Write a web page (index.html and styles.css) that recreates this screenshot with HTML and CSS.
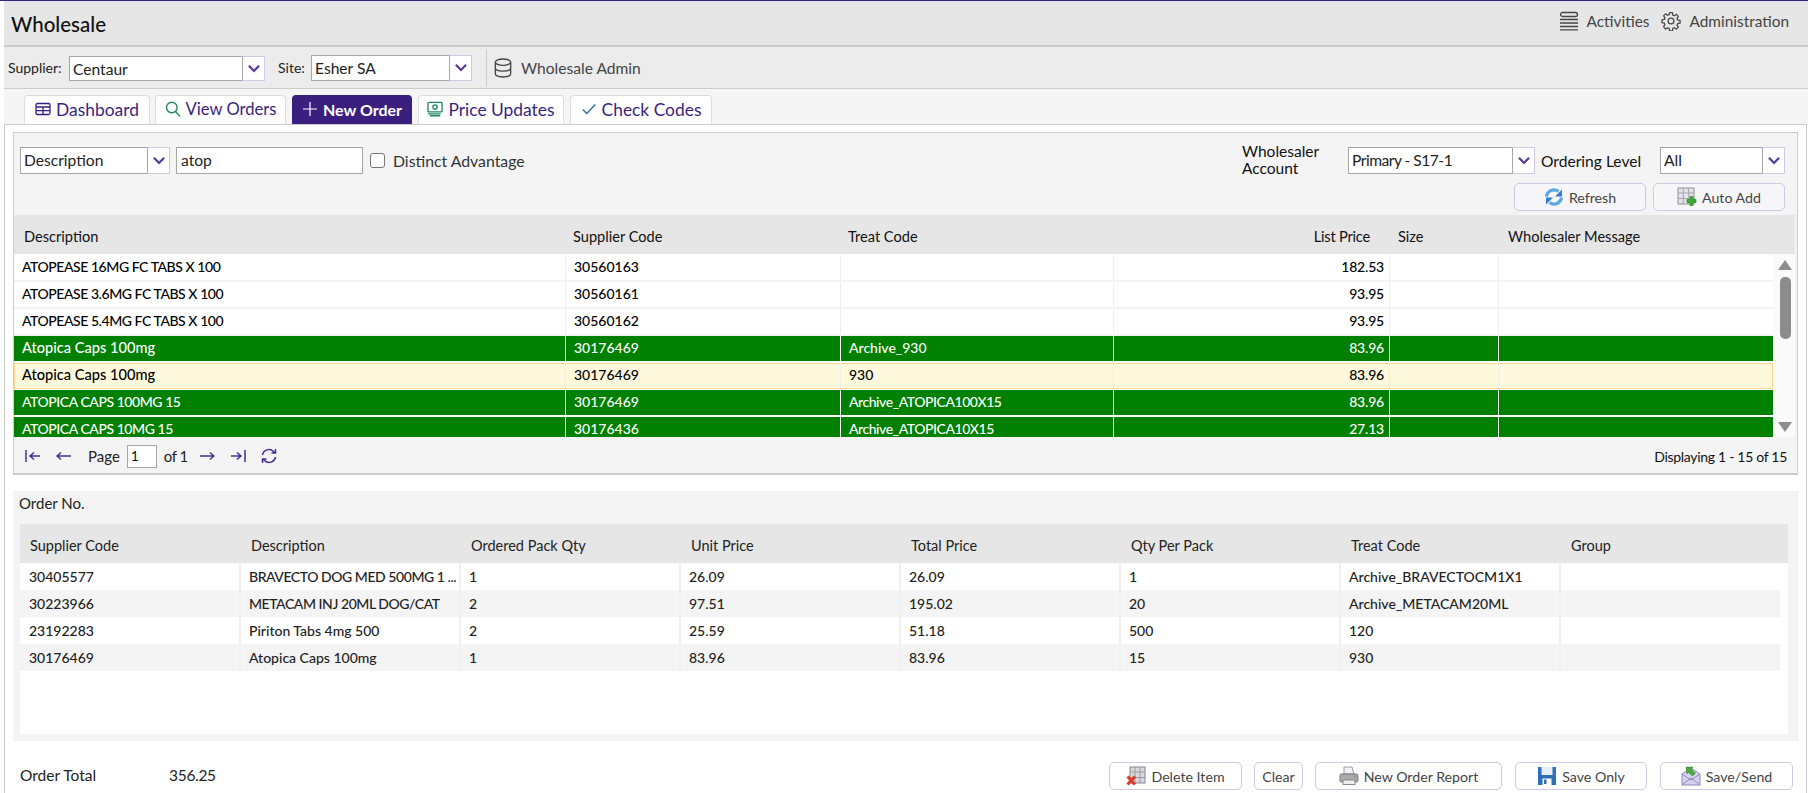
FILE: index.html
```html
<!DOCTYPE html>
<html lang="en">
<head>
<meta charset="utf-8">
<title>Wholesale</title>
<link rel="stylesheet" href="styles.css">
</head>
<body>
<div class="app">
  <header class="title-bar">
    <h1 class="title">Wholesale</h1>
    <nav class="top-links">
      <a class="top-link">
        <svg class="ico-20" viewBox="0 0 20 20" fill="none" stroke="#444" stroke-width="1.3"><rect x="1.5" y="1.5" width="17" height="4" rx="2"/><path d="M1 8.5h18M1 12h18M1 15.5h18M1 18.8h18"/></svg>
        <span>Activities</span>
      </a>
      <a class="top-link">
        <svg class="ico-20" viewBox="0 0 24 24" fill="none" stroke="#444" stroke-width="1.5" stroke-linejoin="round"><circle cx="12" cy="12" r="3.5"/><path d="M10.3 2h3.4l.5 2.9 1.9.8 2.4-1.7 2.4 2.4-1.7 2.4.8 1.9 2.9.5v3.4l-2.9.5-.8 1.9 1.7 2.4-2.4 2.4-2.4-1.7-1.9.8-.5 2.9h-3.4l-.5-2.9-1.9-.8-2.4 1.7L3.100 18.800l1.700-2.400-.8-1.900-2.900-.5v-3.400l2.900-.5.8-1.900-1.700-2.400 2.400-2.400 2.400 1.700 1.900-.8z"/></svg>
        <span>Administration</span>
      </a>
    </nav>
  </header>

  <div class="toolbar">
    <label class="tool-label">Supplier:</label>
    <div class="combo combo-supplier"><span class="combo-text">Centaur</span><span class="combo-arrow"><svg class="chev" viewBox="0 0 12 8"><path d="M1.500 1.500L6 6.200l4.500-4.700"/></svg></span></div>
    <label class="tool-label site-label">Site:</label>
    <div class="combo combo-site"><span class="combo-text">Esher SA</span><span class="combo-arrow"><svg class="chev" viewBox="0 0 12 8"><path d="M1.500 1.500L6 6.200l4.500-4.700"/></svg></span></div>
    <span class="tool-sep"></span>
    <svg class="ico-db" viewBox="0 0 20 22" fill="none" stroke="#444" stroke-width="1.500"><ellipse cx="10" cy="4.500" rx="8.500" ry="3.500"/><path d="M1.500 4.500v13c0 2 3.800 3.500 8.500 3.500s8.500-1.500 8.500-3.500v-13M1.500 11c0 2 3.800 3.500 8.500 3.500s8.500-1.500 8.500-3.500"/></svg>
    <span class="tool-text">Wholesale Admin</span>
  </div>

  <nav class="tabs">
    <a class="tab tab-dash">
      <svg class="ico-tab" viewBox="0 0 16 14" fill="none" stroke="#3b1f7f" stroke-width="1.300"><rect x="1" y="1.500" width="14" height="11" rx="1.500"/><path d="M1 5h14M1 8.700h14M8 5v7.500"/></svg>
      Dashboard</a>
    <a class="tab tab-view">
      <svg class="ico-tab" viewBox="0 0 16 16" fill="none" stroke="#1f8a5c" stroke-width="1.400"><circle cx="6.800" cy="6.500" r="5.300"/><path d="M10.500 10.500l4.500 5"/></svg>
      View Orders</a>
    <a class="tab tab-new">
      <svg class="ico-tab" viewBox="0 0 16 16" fill="none" stroke="#fff" stroke-width="1.200"><path d="M8 1v14M1 8h14"/></svg>
      New Order</a>
    <a class="tab tab-price">
      <svg class="ico-tab" viewBox="0 0 17 16" fill="none" stroke="#1f8a5c" stroke-width="1.400"><rect x="1" y="1" width="15" height="10" rx="1"/><circle cx="8.500" cy="6" r="2.300"/><path d="M1 13.200h13.500M3 15.200h11"/></svg>
      Price Updates</a>
    <a class="tab tab-check">
      <svg class="ico-tab" viewBox="0 0 14 12" fill="none" stroke="#2c6ca8" stroke-width="1.200"><path d="M1.500 6.500l3.500 3.500 7.500-8"/></svg>
      Check Codes</a>
  </nav>

  <main class="main">
    <section class="search-panel">
      <div class="filters">
        <div class="filters-left">
          <div class="combo combo-field"><span class="combo-text">Description</span><span class="combo-arrow"><svg class="chev" viewBox="0 0 12 8"><path d="M1.500 1.500L6 6.200l4.500-4.700"/></svg></span></div>
          <div class="text-input search-input">atop</div>
          <span class="checkbox"></span>
          <span class="check-label">Distinct Advantage</span>
        </div>
        <div class="filters-right">
          <div class="filters-row">
            <span class="acct-label">Wholesaler Account</span>
            <div class="combo combo-account"><span class="combo-text">Primary - S17-1</span><span class="combo-arrow"><svg class="chev" viewBox="0 0 12 8"><path d="M1.500 1.500L6 6.200l4.500-4.700"/></svg></span></div>
            <span class="level-label">Ordering Level</span>
            <div class="combo combo-level"><span class="combo-text">All</span><span class="combo-arrow"><svg class="chev" viewBox="0 0 12 8"><path d="M1.500 1.500L6 6.200l4.500-4.700"/></svg></span></div>
          </div>
          <div class="filters-actions">
            <button class="btn btn-wide">
              <svg class="ico-btn" viewBox="0 0 20 20" fill="none" stroke-width="3.200"><path d="M2.500 9.500a7.500 7.500 0 0 1 12-5" stroke="#5aa6e6"/><path d="M18 2.500v7h-7z" fill="#2f80cf"/><path d="M17.500 10.500a7.500 7.500 0 0 1-12 5" stroke="#5aa6e6"/><path d="M2 17.500v-7h7z" fill="#2f80cf"/></svg>
              Refresh</button>
            <button class="btn btn-wide">
              <svg class="ico-btn" viewBox="0 0 20 20"><rect x="1" y="1" width="16" height="16" fill="#e4e4e8" stroke="#8f8f96"/><path d="M1 6h16M1 11.500h16M6.300 1v16M11.700 1v16" stroke="#a3a3aa" fill="none"/><path d="M13 9.500h3v3h3v3h-3v3h-3v-3h-3v-3h3z" fill="#3cae3a" stroke="#1d7a1d" stroke-width=".6"/></svg>
              Auto Add</button>
          </div>
        </div>
      </div>

      <div class="grid-head">
        <div class="gh gh-first">Description</div>
        <div class="gh">Supplier Code</div>
        <div class="gh">Treat Code</div>
        <div class="gh gh-num">List Price</div>
        <div class="gh">Size</div>
        <div class="gh">Wholesaler Message</div>
      </div>
      <div class="grid-wrap">
        <div class="grid-body">
          <div class="row"><div class="cell caps">ATOPEASE 16MG FC TABS X 100</div><div class="cell">30560163</div><div class="cell"></div><div class="cell num">182.53</div><div class="cell"></div><div class="cell"></div></div>
          <div class="row"><div class="cell caps">ATOPEASE 3.6MG FC TABS X 100</div><div class="cell">30560161</div><div class="cell"></div><div class="cell num">93.95</div><div class="cell"></div><div class="cell"></div></div>
          <div class="row"><div class="cell caps">ATOPEASE 5.4MG FC TABS X 100</div><div class="cell">30560162</div><div class="cell"></div><div class="cell num">93.95</div><div class="cell"></div><div class="cell"></div></div>
          <div class="row green"><div class="cell mixed">Atopica Caps 100mg</div><div class="cell">30176469</div><div class="cell">Archive_930</div><div class="cell num">83.96</div><div class="cell"></div><div class="cell"></div></div>
          <div class="row selected"><div class="cell mixed">Atopica Caps 100mg</div><div class="cell">30176469</div><div class="cell">930</div><div class="cell num">83.96</div><div class="cell"></div><div class="cell"></div></div>
          <div class="row green"><div class="cell caps">ATOPICA CAPS 100MG 15</div><div class="cell">30176469</div><div class="cell caps">Archive_ATOPICA100X15</div><div class="cell num">83.96</div><div class="cell"></div><div class="cell"></div></div>
          <div class="row green"><div class="cell caps">ATOPICA CAPS 10MG 15</div><div class="cell">30176436</div><div class="cell caps">Archive_ATOPICA10X15</div><div class="cell num">27.13</div><div class="cell"></div><div class="cell"></div></div>
        </div>
        <div class="scrollbar">
          <span class="sb-up"></span>
          <span class="sb-thumb"></span>
          <span class="sb-down"></span>
        </div>
      </div>
      <div class="pager">
        <svg class="pg-ico" viewBox="0 0 16 14"><path d="M1 1v12M15 7H5M9 3.500L5 7l4 3.500"/></svg>
        <svg class="pg-ico pg-prev" viewBox="0 0 16 14"><path d="M15 7H1M5 3.500L1 7l4 3.500"/></svg>
        <span class="pg-text">Page</span>
        <div class="pg-input">1</div>
        <span class="pg-text pg-of">of 1</span>
        <svg class="pg-ico pg-next" viewBox="0 0 16 14"><path d="M1 7h14M11 3.500L15 7l-4 3.500"/></svg>
        <svg class="pg-ico" viewBox="0 0 16 14"><path d="M15 1v12M1 7h10M7 3.500L11 7l-4 3.500"/></svg>
        <svg class="pg-ico pg-refresh" viewBox="0 0 16 16"><path d="M1.500 7a6.500 6.500 0 0 1 11-3.500L14.500 5M14.500 1v4h-4M14.500 9a6.500 6.500 0 0 1-11 3.500L1.500 11M1.500 15v-4h4"/></svg>
        <span class="pg-display">Displaying 1 - 15 of 15</span>
      </div>
    </section>

    <section class="order-panel">
      <div class="order-no">Order No.</div>
      <div class="order-grid">
        <div class="og-head">
          <div class="og-h">Supplier Code</div><div class="og-h">Description</div><div class="og-h">Ordered Pack Qty</div><div class="og-h">Unit Price</div><div class="og-h">Total Price</div><div class="og-h">Qty Per Pack</div><div class="og-h">Treat Code</div><div class="og-h">Group</div>
        </div>
        <div class="og-row"><div class="og-c">30405577</div><div class="og-c caps">BRAVECTO DOG MED 500MG 1 ...</div><div class="og-c">1</div><div class="og-c">26.09</div><div class="og-c">26.09</div><div class="og-c">1</div><div class="og-c">Archive_BRAVECTOCM1X1</div><div class="og-c"></div></div>
        <div class="og-row alt"><div class="og-c">30223966</div><div class="og-c caps">METACAM INJ 20ML DOG/CAT</div><div class="og-c">2</div><div class="og-c">97.51</div><div class="og-c">195.02</div><div class="og-c">20</div><div class="og-c">Archive_METACAM20ML</div><div class="og-c"></div></div>
        <div class="og-row"><div class="og-c">23192283</div><div class="og-c mixed">Piriton Tabs 4mg 500</div><div class="og-c">2</div><div class="og-c">25.59</div><div class="og-c">51.18</div><div class="og-c">500</div><div class="og-c">120</div><div class="og-c"></div></div>
        <div class="og-row alt"><div class="og-c">30176469</div><div class="og-c mixed">Atopica Caps 100mg</div><div class="og-c">1</div><div class="og-c">83.96</div><div class="og-c">83.96</div><div class="og-c">15</div><div class="og-c">930</div><div class="og-c"></div></div>
      </div>
    </section>

    <footer class="order-foot">
      <div class="total">
        <span class="total-label">Order Total</span>
        <span class="total-value">356.25</span>
      </div>
      <div class="foot-actions">
        <button class="btn btn-delete">
          <svg class="ico-btn" viewBox="0 0 20 20"><rect x="4" y="1" width="15" height="16" fill="#d8d8dd" stroke="#85858c"/><path d="M4 6h15M4 11.500h15M9 1v16M14 1v16" stroke="#9a9aa2" fill="none"/><path d="M1.500 10.500l7.500 8M9 10.500l-7.500 8" stroke="#d83a2a" stroke-width="3"/></svg>
          Delete Item</button>
        <button class="btn btn-clear">Clear</button>
        <button class="btn btn-report">
          <svg class="ico-btn" viewBox="0 0 20 20"><path d="M5 1h8l2 7H5z" fill="#f2f2f4" stroke="#9a9aa0"/><rect x="1" y="8" width="18" height="8" rx="1.500" fill="#a9a9ae" stroke="#77777c"/><rect x="4" y="14" width="12" height="4.500" fill="#eee" stroke="#8a8a8f"/><circle cx="16" cy="10.500" r="1" fill="#4caf50"/></svg>
          New Order Report</button>
        <button class="btn btn-save">
          <svg class="ico-btn" viewBox="0 0 20 20"><path d="M1 1h18v18H1z" fill="#2f6fb8"/><rect x="4.500" y="1" width="11" height="8" fill="#e8eef6"/><rect x="5.500" y="12.500" width="9" height="6.500" fill="#fff"/><rect x="7" y="13.500" width="2.500" height="4.500" fill="#2f6fb8"/></svg>
          Save Only</button>
        <button class="btn btn-send">
          <svg class="ico-btn" viewBox="0 0 20 20"><path d="M1 8l9-6 9 6v11H1z" fill="#d7d3ee" stroke="#8f88bd"/><path d="M1 19l9-7 9 7M1 8l9 6 9-6" fill="none" stroke="#8f88bd"/><path d="M5 1l7 0-1.500 2.500 4 3.500-3 3-4-3.500L6 8z" fill="#46ad3c" stroke="#2a7d24" stroke-width=".5"/></svg>
          Save/Send</button>
      </div>
    </footer>
  </main>
</div>
</body>
</html>
```

FILE: styles.css
```css
* { box-sizing: border-box; }
html, body { margin: 0; padding: 0; height: 793px; overflow: hidden; background: #fff; }
body {
  border-top: 1px solid #3b1f7f;
  font-family: "Lato", "Open Sans", sans-serif;
  font-size: 14px;
  color: #111;
}
.app { padding-left: 4px; height: 792px; display: flex; flex-direction: column; }

/* title bar */
.title-bar {
  height: 46px; flex: none;
  display: flex; justify-content: space-between;
  background: #e6e6e6; border-bottom: 2px solid #ccc;
  padding: 0 19px 0 7px;
}
.title { margin: 0; padding-top: 10px; font-size: 20.5px; line-height: 26px; font-weight: 500; color: #111; }
.top-links { display: flex; gap: 12px; padding-top: 9px; height: 30px; }
.top-link { display: flex; align-items: center; gap: 8px; font-size: 15.4px; color: #444; }
.ico-20 { width: 20px; height: 20px; flex: none; }

/* toolbar */
.toolbar {
  height: 42px; flex: none;
  display: flex; align-items: center;
  background: #ececec; border-bottom: 1px solid #ccc;
  padding-left: 4px;
  font-size: 14px;
}
.tool-label { color: #222; width: 61px; }
.site-label { width: 33px; margin-left: 13px; }
.combo { display: flex; height: 27px; border: 1px solid #a6a6a6; background: #fff; flex: none; }
.combo-text { flex: 1; padding: 0 3px; line-height: 25px; font-size: 15.6px; color: #222; white-space: nowrap; overflow: hidden; }
.combo-arrow { width: 23px; flex: none; margin: -1px -1px -1px 0; border: 1px solid #cfc8e6; border-left-color: #a6a6a6; background: #fff; display: flex; align-items: center; justify-content: center; }
.chev { width: 14px; height: 9px; fill: none; stroke: #5b3a9e; stroke-width: 2; }
.combo-supplier { width: 196px; height: 25px; margin-top: 1px; }
.combo-site { width: 161px; height: 26px; }
.tool-sep { width: 1px; height: 38px; background: #ccc; margin-left: 14px; }
.ico-db { width: 18px; height: 20px; margin-left: 7px; }
.tool-text { margin-left: 9px; font-size: 15.6px; color: #444; }

/* tabs */
.tabs {
  height: 35px; flex: none;
  display: flex; align-items: flex-end; gap: 5px;
  background: #f5f5f5; padding-left: 20px;
}
.tab {
  height: 29px; padding-bottom: 2px;
  display: flex; align-items: center; justify-content: center; gap: 5px;
  background: #fff; border: 1px solid #ddd; border-bottom: 0; border-radius: 4px 4px 0 0;
  font-size: 17.4px; color: #3b1f7f;
}
.ico-tab { width: 16px; height: 16px; flex: none; }
.tab-dash { width: 126px; }
.tab-view { width: 131px; font-size: 16.6px; }
.tab-new { width: 120px; margin-left: 1px; background: #3b1f7f; border-color: #3b1f7f; color: #fff; font-size: 16px; font-weight: 700; }
.tab-price { width: 146px; margin-left: 1px; }
.tab-check { width: 142px; margin-left: 1px; }

/* main */
.main {
  flex: 1; min-height: 0;
  border: 1px solid #ccc; border-bottom: 0;
  margin-right: 1px;
  padding: 7px 8px 0;
  background: #fff;
  overflow: hidden;
}

/* search panel */
.search-panel {
  height: 343px;
  border: 1px solid #ccc; border-bottom-width: 2px;
  background: #f4f4f4;
}
.filters { height: 82px; display: flex; justify-content: space-between; padding: 14px 12px 0 6px; }
.filters-left { display: flex; align-items: center; height: 27px; }
.combo-field { width: 150px; }
.text-input { height: 27px; border: 1px solid #a6a6a6; background: #fff; padding: 0 4px; line-height: 25px; font-size: 15.6px; color: #222; }
.search-input { width: 187px; margin-left: 6px; }
.checkbox { width: 15px; height: 15px; border: 1px solid #777; border-radius: 3px; background: #fff; margin-left: 7px; }
.check-label { margin-left: 8px; font-size: 15.8px; color: #333; }
.filters-right { display: flex; flex-direction: column; gap: 9px; }
.filters-row { display: flex; align-items: center; height: 27px; }
.acct-label { width: 106px; font-size: 15.5px; line-height: 17px; margin-top: -2px; color: #111; }
.combo-account { width: 187px; }
.combo-account .combo-text { letter-spacing: -0.5px; }
.level-label { width: 125px; padding-left: 6px; font-size: 15.6px; color: #111; }
.combo-level { width: 125px; }
.filters-actions { display: flex; justify-content: flex-end; gap: 7px; }

/* buttons */
.btn {
  display: flex; align-items: center; justify-content: center; gap: 5px;
  height: 28px; padding: 0;
  background: #fff; border: 1px solid #cfc8e6; border-radius: 5px;
  font-family: inherit; font-size: 14.2px; color: #444;
}
.filters-actions .btn { background: #f6f6f8; }
.ico-btn { width: 20px; height: 20px; flex: none; }
.btn-wide { width: 132px; }
.btn-delete { width: 133px; }
.btn-clear { width: 49px; }
.btn-report { width: 187px; }
.btn-save { width: 132px; }
.btn-send { width: 133px; }

/* product grid */
.grid-head, .row { display: grid; grid-template-columns: 552px 275px 273px 276px 109px 274px; }
.grid-head { height: 39px; padding-top: 4px; background: #e6e6e6; width: 1781px; align-items: center; font-size: 14.6px; color: #111; }
.gh { padding-left: 7px; }
.gh:nth-child(5) { padding-left: 8px; }
.gh:nth-child(6) { padding-left: 9px; }
.gh-first { padding-left: 10px; }
.gh-num { text-align: right; padding-right: 20px; letter-spacing: -0.2px; }
.grid-wrap { display: flex; height: 183px; width: 1781px; overflow: hidden; }
.grid-body { width: 1759px; flex: none; background: #fff; padding-top: 1px; overflow: hidden; }
.row { height: 27px; border-bottom: 2px solid #f3f3f3; background: #fff; }
.cell { padding: 0 8px; line-height: 24px; font-size: 14px; font-weight: 500; color: #000; border-right: 1px solid #eee; white-space: nowrap; overflow: hidden; }
.cell:last-child { border-right: 0; }
.caps { letter-spacing: -0.45px; }
.mixed { font-size: 14.6px; }
.num { text-align: right; padding-right: 5px; letter-spacing: -0.2px; }
.green { background: #008000; border-bottom-color: #fff; }
.green .cell { color: #fff; border-right-color: #fff; }
.selected { background: #fef9dc; border-bottom: 1px solid #fff; box-shadow: inset 0 0 0 1px #fcd88a; }
.scrollbar { width: 22px; flex: none; position: relative; background: #fafafa; }
.sb-up { position: absolute; left: 5px; top: 6px; border: 7px solid transparent; border-top: 0; border-bottom: 10px solid #8c8c8c; }
.sb-down { position: absolute; left: 5px; top: 168px; border: 7px solid transparent; border-bottom: 0; border-top: 10px solid #8c8c8c; }
.sb-thumb { position: absolute; left: 7px; top: 23px; width: 11px; height: 62px; border-radius: 5px; background: #8c8c8c; }

/* pager */
.pager { height: 36px; display: flex; align-items: center; padding: 2px 10px 0 11px; background: #f4f4f4; }
.pg-ico { width: 16px; height: 14px; flex: none; fill: none; stroke: #4b2d8f; stroke-width: 1.500; margin-right: 15px; }
.pg-prev { margin-right: 16px; }
.pg-next { margin-left: 11px; }
.pg-refresh { height: 16px; margin-right: 0; }
.pg-text { font-size: 15px; color: #222; }
.pg-of { letter-spacing: -0.5px; }
.pg-input { width: 30px; height: 23px; margin: 0 7px 0 7px; padding-left: 3px; border: 1px solid #a6a6a6; background: #fff; font-size: 14px; line-height: 19px; }
.pg-display { margin-left: auto; font-size: 14px; letter-spacing: -0.3px; color: #111; }

/* order panel */
.order-panel { height: 250px; margin: 16px -1px 0 0; background: #f4f4f4; padding: 0 11px 0 7px; }
.order-no { height: 33px; margin-left: -1px; line-height: 24px; font-size: 15px; color: #222; }
.order-grid { height: 210px; background: #fff; }
.og-head, .og-row { display: grid; grid-template-columns: 221px repeat(7, 220px); }
.og-head { height: 39px; padding-top: 4px; background: #e6e6e6; align-items: center; font-size: 14.5px; color: #222; }
.og-h { padding-left: 10px; }
.og-row { height: 27px; width: 1760px; background: #fff; }
.og-row.alt { background: #f4f4f4; }
.og-c { padding-left: 8px; line-height: 27px; font-size: 14px; font-weight: 500; color: #222; border-right: 2px solid #f0f0f0; white-space: nowrap; overflow: hidden; }
.og-c:first-child { padding-left: 9px; }
.og-c:last-child { border-right: 0; }

/* footer */
.order-foot { display: flex; justify-content: space-between; align-items: flex-start; padding: 21px 5px 0 7px; }
.total { display: flex; font-size: 15.5px; line-height: 26px; color: #222; }
.total-label { width: 149px; }
.total-value { letter-spacing: -0.3px; }
.foot-actions { display: flex; gap: 12px; }
.btn-save, .btn-send { margin-left: 1px; }
```
